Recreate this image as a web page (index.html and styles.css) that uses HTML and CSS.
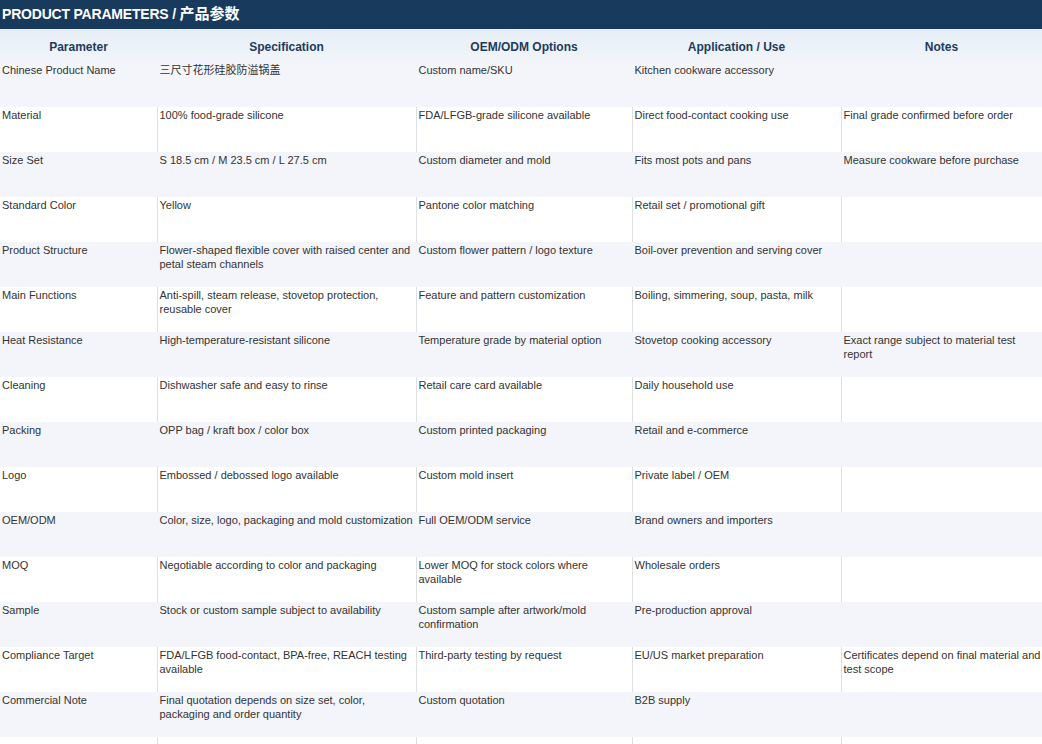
FILE: index.html
```html
<!DOCTYPE html>
<html lang="en">
<head>
<meta charset="utf-8">
<title>Product Parameters</title>
<link rel="stylesheet" href="styles.css">
</head>
<body>
<div class="title-bar">PRODUCT PARAMETERS / <span class="cjk">产品参数</span></div>
<table class="params">
  <colgroup>
    <col class="c1"><col class="c2"><col class="c3"><col class="c4"><col class="c5">
  </colgroup>
  <thead>
    <tr><th>Parameter</th><th>Specification</th><th>OEM/ODM Options</th><th>Application / Use</th><th>Notes</th></tr>
  </thead>
  <tbody>
    <tr><td>Chinese Product Name</td><td>三尺寸花形硅胶防溢锅盖</td><td>Custom name/SKU</td><td>Kitchen cookware accessory</td><td></td></tr>
    <tr><td>Material</td><td>100% food-grade silicone</td><td>FDA/LFGB-grade silicone available</td><td>Direct food-contact cooking use</td><td>Final grade confirmed before order</td></tr>
    <tr><td>Size Set</td><td>S 18.5 cm / M 23.5 cm / L 27.5 cm</td><td>Custom diameter and mold</td><td>Fits most pots and pans</td><td>Measure cookware before purchase</td></tr>
    <tr><td>Standard Color</td><td>Yellow</td><td>Pantone color matching</td><td>Retail set / promotional gift</td><td></td></tr>
    <tr><td>Product Structure</td><td>Flower-shaped flexible cover with raised center and petal steam channels</td><td>Custom flower pattern / logo texture</td><td>Boil-over prevention and serving cover</td><td></td></tr>
    <tr><td>Main Functions</td><td>Anti-spill, steam release, stovetop protection, reusable cover</td><td>Feature and pattern customization</td><td>Boiling, simmering, soup, pasta, milk</td><td></td></tr>
    <tr><td>Heat Resistance</td><td>High-temperature-resistant silicone</td><td>Temperature grade by material option</td><td>Stovetop cooking accessory</td><td>Exact range subject to material test report</td></tr>
    <tr><td>Cleaning</td><td>Dishwasher safe and easy to rinse</td><td>Retail care card available</td><td>Daily household use</td><td></td></tr>
    <tr><td>Packing</td><td>OPP bag / kraft box / color box</td><td>Custom printed packaging</td><td>Retail and e-commerce</td><td></td></tr>
    <tr><td>Logo</td><td>Embossed / debossed logo available</td><td>Custom mold insert</td><td>Private label / OEM</td><td></td></tr>
    <tr><td>OEM/ODM</td><td>Color, size, logo, packaging and mold customization</td><td>Full OEM/ODM service</td><td>Brand owners and importers</td><td></td></tr>
    <tr><td>MOQ</td><td>Negotiable according to color and packaging</td><td>Lower MOQ for stock colors where available</td><td>Wholesale orders</td><td></td></tr>
    <tr><td>Sample</td><td>Stock or custom sample subject to availability</td><td>Custom sample after artwork/mold confirmation</td><td>Pre-production approval</td><td></td></tr>
    <tr><td>Compliance Target</td><td>FDA/LFGB food-contact, BPA-free, REACH testing available</td><td>Third-party testing by request</td><td>EU/US market preparation</td><td>Certificates depend on final material and test scope</td></tr>
    <tr><td>Commercial Note</td><td>Final quotation depends on size set, color, packaging and order quantity</td><td>Custom quotation</td><td>B2B supply</td><td></td></tr>
    <tr><td></td><td></td><td></td><td></td><td></td></tr>
  </tbody>
</table>
</body>
</html>
```

FILE: styles.css
```css
html, body {
  margin: 0;
  padding: 0;
  background: #ffffff;
}

body {
  font-family: "Liberation Sans", Arial, "Noto Sans CJK SC", sans-serif;
  color: #333333;
}

.title-bar {
  height: 29px;
  line-height: 29px;
  background: #183a5d;
  color: #ffffff;
  font-weight: bold;
  font-size: 14px;
  padding-left: 2px;
  letter-spacing: -0.2px;
  white-space: nowrap;
  overflow: hidden;
}

.title-bar .cjk {
  font-size: 15px;
  line-height: 1;
  letter-spacing: 0;
}

.params {
  width: 1042px;
  border-collapse: collapse;
  table-layout: fixed;
}

.c1 { width: 157px; }
.c2 { width: 259px; }
.c3 { width: 216px; }
.c4 { width: 209px; }
.c5 { width: 201px; }

.params thead tr {
  background: linear-gradient(to bottom, #e6eef6 0%, #f1f5fa 100%);
}

.params th {
  height: 33px;
  padding: 2px 0 0 0;
  font-size: 12px;
  font-weight: bold;
  color: #1d3b5e;
  text-align: center;
  vertical-align: middle;
  box-sizing: border-box;
}

.params td {
  height: 45px;
  box-sizing: border-box;
  padding: 1px 0 0 2px;
  vertical-align: top;
  font-size: 11px;
  line-height: 14px;
  color: #333333;
  border-left: 1px solid #f3f5fa;
}

.params td:first-child {
  border-left: none;
}

.params tbody tr:nth-child(odd) {
  background: #f3f5fa;
}

.params tbody tr:nth-child(even) {
  background: #ffffff;
}

.params tbody tr:nth-child(even) td {
  border-left-color: #dcdfe4;
}

.params tbody tr:nth-child(even) td:first-child {
  border-left: none;
}
```
